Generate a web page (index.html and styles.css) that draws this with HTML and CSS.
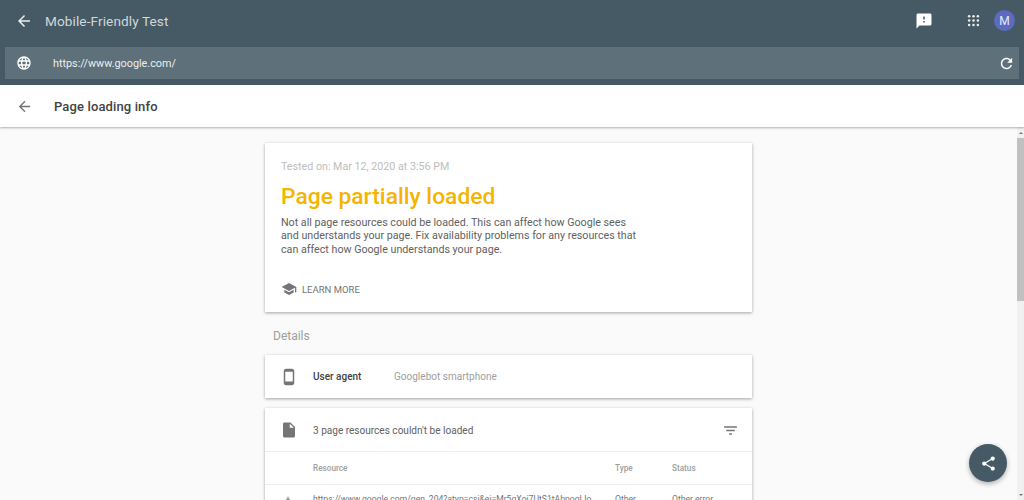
FILE: index.html
```html
<!DOCTYPE html>
<html lang="en">
<head>
<meta charset="utf-8">
<title>Mobile-Friendly Test</title>
<link rel="stylesheet" href="styles.css">
</head>
<body>
<div class="app">
  <header class="topbar">
    <div class="titlerow">
      <svg class="ico back" viewBox="0 0 24 24"><path d="M20 11H7.83l5.59-5.59L12 4l-8 8 8 8 1.41-1.41L7.83 13H20z"/></svg>
      <span class="apptitle">Mobile-Friendly Test</span>
      <svg class="ico feedback" viewBox="0 0 24 24"><path d="M20 2H4c-1.1 0-2 .9-2 2v18l4-4h14c1.1 0 2-.9 2-2V4c0-1.1-.9-2-2-2zm-7 12h-2v-2h2v2zm0-4h-2V6h2v4z"/></svg>
      <svg class="ico apps" viewBox="0 0 24 24"><g><circle cx="5" cy="5" r="2"/><circle cx="12" cy="5" r="2"/><circle cx="19" cy="5" r="2"/><circle cx="5" cy="12" r="2"/><circle cx="12" cy="12" r="2"/><circle cx="19" cy="12" r="2"/><circle cx="5" cy="19" r="2"/><circle cx="12" cy="19" r="2"/><circle cx="19" cy="19" r="2"/></g></svg>
      <span class="avatar">M</span>
    </div>
    <div class="urlbar">
      <svg class="ico globe" viewBox="0 0 24 24"><path d="M11.99 2C6.47 2 2 6.48 2 12s4.47 10 9.99 10C17.52 22 22 17.52 22 12S17.52 2 11.99 2zm6.93 6h-2.95c-.32-1.25-.78-2.45-1.38-3.56 1.84.63 3.37 1.91 4.33 3.56zM12 4.04c.83 1.2 1.48 2.53 1.91 3.96h-3.82c.43-1.43 1.08-2.76 1.91-3.96zM4.26 14C4.1 13.36 4 12.69 4 12s.1-1.36.26-2h3.38c-.08.66-.14 1.32-.14 2 0 .68.06 1.34.14 2H4.26zm.82 2h2.95c.32 1.25.78 2.45 1.38 3.56-1.84-.63-3.37-1.9-4.33-3.56zm2.95-8H5.08c.96-1.66 2.49-2.93 4.33-3.56C8.81 5.55 8.35 6.75 8.03 8zM12 19.96c-.83-1.2-1.48-2.53-1.91-3.96h3.82c-.43 1.43-1.08 2.76-1.91 3.96zM14.34 14H9.66c-.09-.66-.16-1.32-.16-2 0-.68.07-1.35.16-2h4.68c.09.65.16 1.32.16 2 0 .68-.07 1.34-.16 2zm.25 5.56c.6-1.11 1.06-2.31 1.38-3.56h2.95c-.96 1.65-2.49 2.93-4.33 3.56zM16.36 14c.08-.66.14-1.32.14-2 0-.68-.06-1.34-.14-2h3.38c.16.64.26 1.31.26 2s-.1 1.36-.26 2h-3.38z"/></svg>
      <span class="urltext">https://www.google.com/</span>
      <svg class="ico refresh" viewBox="0 0 24 24"><path d="M17.65 6.35C16.2 4.9 14.21 4 12 4c-4.42 0-7.99 3.58-7.99 8s3.57 8 7.99 8c3.73 0 6.84-2.55 7.73-6h-2.08c-.82 2.33-3.04 4-5.65 4-3.31 0-6-2.69-6-6s2.69-6 6-6c1.66 0 3.14.69 4.22 1.78L13 11h7V4l-2.35 2.35z"/></svg>
    </div>
  </header>
  <div class="subbar">
    <svg class="ico subback" viewBox="0 0 24 24"><path d="M20 11H7.83l5.59-5.59L12 4l-8 8 8 8 1.41-1.41L7.83 13H20z"/></svg>
    <h1 class="subtitle">Page loading info</h1>
  </div>
  <div class="scrollarea">
    <main class="content">
      <section class="card summary">
        <p class="tested">Tested on: Mar 12, 2020 at 3:56 PM</p>
        <h2 class="status">Page partially loaded</h2>
        <p class="desc">Not all page resources could be loaded. This can affect how Google sees and understands your page. Fix availability problems for any resources that can affect how Google understands your page.</p>
        <div class="learn">
          <svg class="ico school" viewBox="0 0 24 24"><path d="M5 13.18v4L12 21l7-3.82v-4L12 17l-7-3.82zM12 3 1 9l11 6 9-4.91V17h2V9L12 3z"/></svg>
          <span>LEARN MORE</span>
        </div>
      </section>
      <h3 class="details">Details</h3>
      <section class="card agent">
        <svg class="ico rowicon" viewBox="0 0 24 24"><path d="M16 1H8C6.34 1 5 2.34 5 4v16c0 1.66 1.34 3 3 3h8c1.66 0 3-1.34 3-3V4c0-1.66-1.34-3-3-3zm1 17H7V5h10v13z"/></svg>
        <span class="agentlabel">User agent</span>
        <span class="agentvalue">Googlebot smartphone</span>
      </section>
      <section class="card resources">
        <div class="reshead">
          <svg class="ico rowicon" viewBox="0 0 24 24"><path d="M6 2c-1.1 0-2 .9-2 2v16c0 1.1.9 2 2 2h12c1.1 0 2-.9 2-2V8l-6-6H6zm7 7V3.5L18.5 9H13z"/></svg>
          <span class="restitle">3 page resources couldn't be loaded</span>
          <svg class="ico filter" viewBox="0 0 24 24"><path d="M10 18h4v-2h-4v2zM3 6v2h18V6H3zm3 7h12v-2H6v2z"/></svg>
        </div>
        <div class="tablerow colhead">
          <span class="c-icon"></span>
          <span class="c-res">Resource</span>
          <span class="c-type">Type</span>
          <span class="c-status">Status</span>
        </div>
        <div class="tablerow datarow">
          <span class="c-icon"><svg class="ico warn" viewBox="0 0 24 24"><path d="M1 21h22L12 2 1 21zm12-3h-2v-2h2v2zm0-4h-2v-4h2v4z"/></svg></span>
          <span class="c-res">https://www.google.com/gen_204?atyp=csi&amp;ei=Mr5qXoj7UtS1tAbpoqLIo</span>
          <span class="c-type">Other</span>
          <span class="c-status">Other error</span>
        </div>
      </section>
    </main>
    <div class="scrollbar">
      <span class="arrow up"></span>
      <span class="thumb"></span>
      <span class="arrow down"></span>
    </div>
    <button class="fab" type="button" aria-label="Share">
      <svg class="ico share" viewBox="0 0 24 24"><path d="M18 16.08c-.76 0-1.44.3-1.96.77L8.91 12.7c.05-.23.09-.46.09-.7s-.04-.47-.09-.7l7.05-4.11c.54.5 1.25.81 2.04.81 1.66 0 3-1.34 3-3s-1.34-3-3-3-3 1.34-3 3c0 .24.04.47.09.7L8.04 9.81C7.5 9.31 6.79 9 6 9c-1.66 0-3 1.34-3 3s1.34 3 3 3c.79 0 1.5-.31 2.04-.81l7.12 4.16c-.05.21-.08.43-.08.65 0 1.61 1.31 2.92 2.92 2.92 1.61 0 2.92-1.31 2.92-2.92s-1.31-2.92-2.92-2.92z"/></svg>
    </button>
  </div>
</div>
</body>
</html>
```
FILE: styles.css
```css
* { box-sizing: border-box; }
html, body { margin: 0; height: 100%; overflow: hidden; }
body { font-family: Roboto, "Liberation Sans", sans-serif; background: #fafafa; color: #212121; }
p, h1, h2, h3 { margin: 0; font-weight: 400; }
.app { width: 1024px; height: 500px; display: flex; flex-direction: column; }
.ico { display: block; fill: currentColor; flex: none; }

.topbar { height: 85px; background: #455a64; color: #fff; padding: 0 5px; display: flex; flex-direction: column; flex: none; }
.titlerow { height: 47px; display: flex; align-items: center; padding: 0 3px 6px 0; }
.back { width: 18px; height: 18px; margin-left: 10px; color: #eceff1; }
.apptitle { font-size: 13.6px; color: #cfd8dc; margin-left: 12px; flex: 1; letter-spacing: .1px; }
.feedback { width: 18px; height: 18px; margin-right: 33px; }
.apps { width: 15px; height: 15px; margin-right: 13px; color: #eceff1; }
.avatar { width: 21px; height: 21px; border-radius: 50%; background: #5c6bc0; color: #e8eaf6; font-size: 12px; display: flex; align-items: center; justify-content: center; margin-right: 1px; }
.urlbar { height: 32px; width: 1014px; background: #5e7079; display: flex; align-items: center; padding: 0 4px 0 11px; }
.globe { width: 16px; height: 16px; color: #fff; }
.urltext { font-size: 10.8px; color: #eceff1; margin-left: 21px; flex: 1; }
.refresh { width: 17px; height: 17px; color: #fff; }

.subbar { height: 42px; background: #fff; display: flex; align-items: center; padding-left: 16px; flex: none; box-shadow: 0 1px 2px rgba(0,0,0,.3); position: relative; z-index: 2; }
.subback { width: 17px; height: 17px; color: #757575; }
.subtitle { font-size: 13px; font-weight: 500; color: #424242; margin-left: 21px; letter-spacing: .13px; }

.scrollarea { flex: 1; min-height: 0; position: relative; overflow: hidden; display: flex; background: #fafafa; }
.content { flex: 1; padding: 16px 0 0 265px; }
.card { width: 487px; background: #fff; box-shadow: 0 1px 3px rgba(0,0,0,.35); }

.summary { height: 169px; padding: 17px 16px 16px; }
.tested { font-size: 10.7px; line-height: 14px; color: #bdbdbd; }
.status { font-size: 22.8px; line-height: 30px; font-weight: 500; color: #f4b400; margin-top: 8px; }
.desc { font-size: 10.7px; line-height: 13.4px; color: #616161; width: 360px; margin-top: 4px; }
.learn { display: flex; align-items: center; margin-top: 25px; font-size: 9.5px; color: #757575; }
.school { width: 16px; height: 16px; margin-right: 5px; }

.details { font-size: 12px; line-height: 16px; color: #9e9e9e; margin: 16px 0 0 8px; }

.agent { height: 43px; margin-top: 11px; display: flex; align-items: center; padding-left: 15px; font-size: 10px; }
.rowicon { width: 18px; height: 18px; color: #757575; }
.agentlabel { font-weight: 500; color: #424242; margin-left: 15px; width: 81px; }
.agentvalue { color: #9e9e9e; letter-spacing: .01px; }

.resources { margin-top: 10px; height: 120px; }
.reshead { height: 44px; display: flex; align-items: center; padding: 1px 13px 0 15px; border-bottom: 1px solid #eee; }
.restitle { font-size: 10.05px; color: #616161; margin-left: 15px; flex: 1; }
.filter { width: 17px; height: 17px; color: #757575; }
.tablerow { display: flex; align-items: center; padding-left: 15px; }
.colhead { height: 33px; border-bottom: 1px solid #eee; font-size: 8.2px; font-weight: 500; color: #9e9e9e; }
.datarow { height: 30px; font-size: 8.6px; color: #757575; align-items: flex-start; padding-top: 9px; }
.c-icon { width: 33px; flex: none; }
.c-res { width: 302px; flex: none; white-space: nowrap; overflow: hidden; }
.c-type { width: 57px; flex: none; }
.c-status { flex: 1; }
.warn { width: 14px; height: 14px; color: #9e9e9e; margin: 1px 0 0 1px; }

.scrollbar { width: 7px; background: #f1f1f1; display: flex; flex-direction: column; align-items: center; flex: none; }
.thumb { width: 7px; height: 163px; background: #c1c1c1; margin-top: 4px; }
.arrow { width: 0; height: 0; border-left: 2px solid transparent; border-right: 2px solid transparent; }
.arrow.up { border-bottom: 2px solid #757575; margin-top: 5px; }
.arrow.down { border-top: 2px solid #757575; margin-top: auto; margin-bottom: 4px; }

.fab { position: absolute; left: 969px; top: 317px; width: 38px; height: 38px; border: 0; border-radius: 50%; padding: 0; background: #455a64; color: #fff; display: flex; align-items: center; justify-content: center; box-shadow: 0 2px 5px rgba(0,0,0,.3); }
.share { width: 17px; height: 17px; }
```
